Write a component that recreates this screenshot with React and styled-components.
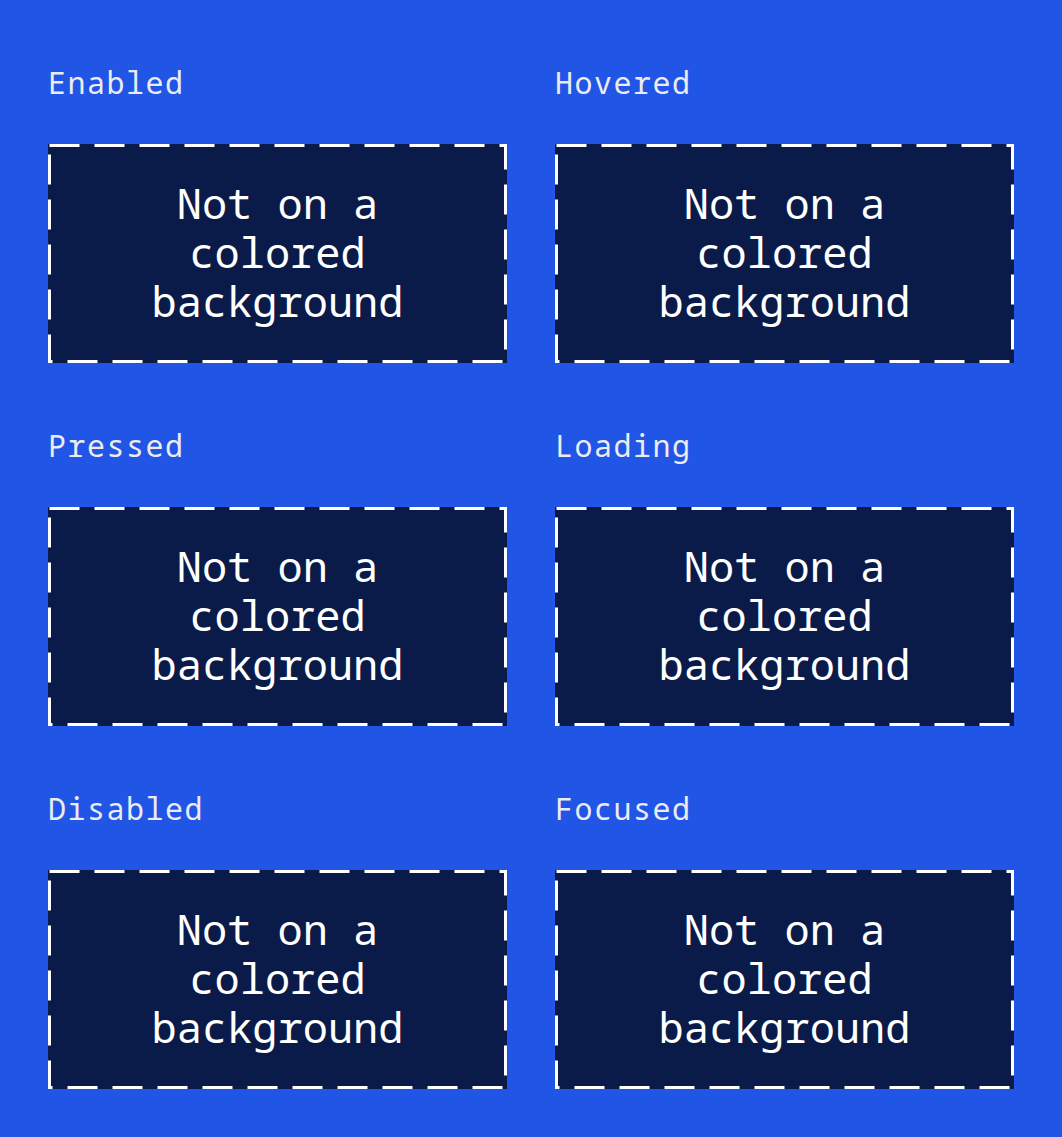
import React from 'react';
import styled, { createGlobalStyle } from 'styled-components';

const GlobalStyle = createGlobalStyle`
  * {
    box-sizing: border-box;
  }

  body {
    margin: 0;
    background: #2055e5;
  }
`;

const Grid = styled.main`
  display: grid;
  grid-template-columns: repeat(2, minmax(0, 1fr));
  gap: 48px;
  padding: 48px;
  font-family: 'Droid Sans Mono', 'Noto Sans Mono', 'DejaVu Sans Mono', monospace;
`;

const State = styled.section`
  display: flex;
  flex-direction: column;
`;

const StateName = styled.h2`
  margin: 17px 0 43px;
  font-size: 30px;
  font-weight: 400;
  line-height: 36px;
  letter-spacing: 0.05em;
  color: #ebebf0;
`;

const Placeholder = styled.div`
  position: relative;
  padding: 34px 36px 38px;
  background: #0a1b49;
`;

const Outline = styled.svg`
  position: absolute;
  inset: 0;
  width: 100%;
  height: 100%;

  rect {
    width: calc(100% - 3px);
    height: calc(100% - 3px);
    fill: none;
    stroke: #ffffff;
    stroke-width: 3px;
    stroke-dasharray: 30 15;
  }
`;

const Message = styled.p`
  margin: 0;
  font-size: 42px;
  line-height: 49px;
  text-align: center;
  color: #ffffff;
`;

const states = ['Enabled', 'Hovered', 'Pressed', 'Loading', 'Disabled', 'Focused'];

export default function App() {
  return (
    <>
      <GlobalStyle />
      <Grid>
        {states.map((name) => (
          <State key={name}>
            <StateName>{name}</StateName>
            <Placeholder>
              <Outline aria-hidden="true">
                <rect x="1.5" y="1.5" />
              </Outline>
              <Message>Not on a colored background</Message>
            </Placeholder>
          </State>
        ))}
      </Grid>
    </>
  );
}
